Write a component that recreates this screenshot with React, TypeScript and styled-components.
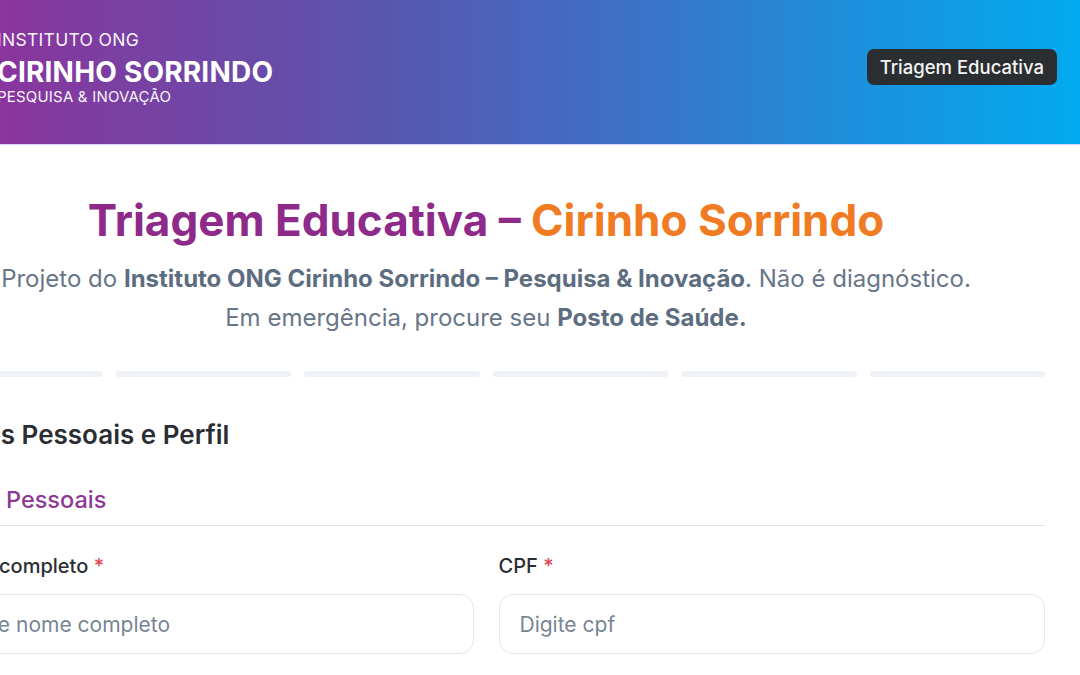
import React from 'react';
import styled, { createGlobalStyle } from 'styled-components';

const GlobalStyle = createGlobalStyle`
  html, body {
    margin: 0;
    padding: 0;
    background: #ffffff;
    overflow: hidden;
  }

  body {
    font-family: Inter, "Noto Sans", "Liberation Sans", sans-serif;
    -webkit-font-smoothing: antialiased;
  }
`;

const Page = styled.div`
  width: 1176px;
  margin-left: -96px;
  min-height: 675px;
  background: #ffffff;
`;

const Header = styled.header`
  box-sizing: border-box;
  height: 144px;
  padding: 0 23px 10px 93px;
  display: flex;
  align-items: center;
  justify-content: space-between;
  background: linear-gradient(90deg, #9a2a95 0%, #8a359d 8%, #5a55ae 40%, #3c72c6 62%, #1a92dd 82%, #02aaef 100%);
  box-shadow: 0 1px 0 rgba(210, 190, 255, 0.7);
  color: #ffffff;
`;

const Brand = styled.div`
  display: flex;
  flex-direction: column;
`;

const BrandTop = styled.span`
  font-size: 17.5px;
  line-height: 24px;
  font-weight: 400;
  letter-spacing: 0.3px;
  opacity: 0.95;
`;

const BrandName = styled.span`
  margin-top: 5px;
  font-size: 28px;
  line-height: 30px;
  font-weight: 700;
  letter-spacing: 0.2px;
`;

const BrandSub = styled.span`
  font-size: 15px;
  line-height: 20px;
  font-weight: 400;
  letter-spacing: 0.2px;
  opacity: 0.95;
`;

const Badge = styled.span`
  height: 36px;
  padding: 0 13px;
  display: inline-flex;
  align-items: center;
  border-radius: 7px;
  background: #2b2e30;
  color: #f4f4f4;
  font-size: 18.5px;
  font-weight: 500;
`;

const Main = styled.main`
  padding: 50px 35px 0 23px;
`;

const Title = styled.h1`
  margin: 0;
  text-align: center;
  font-size: 44px;
  line-height: 53px;
  font-weight: 700;
  color: #8e2a8a;
`;

const Accent = styled.span`
  color: #f07b22;
`;

const Intro = styled.p`
  margin: 12px 0 0;
  text-align: center;
  font-size: 24px;
  line-height: 39px;
  color: #677689;

  strong {
    font-weight: 700;
    color: #5d6d81;
  }
`;

const Steps = styled.div`
  margin-top: 34px;
  display: grid;
  grid-template-columns: repeat(6, 1fr);
  gap: 13px;
`;

const Step = styled.div<{ $done?: boolean }>`
  height: 6px;
  border-radius: 3px;
  background: ${(p) => (p.$done ? '#8e2a8a' : '#eef2f6')};
`;

const StepTitle = styled.h2`
  margin: 42px 0 0;
  padding-left: 8px;
  font-size: 26px;
  line-height: 32px;
  font-weight: 600;
  color: #2a2e33;
`;

const Section = styled.h3`
  margin: 34px 0 0;
  padding: 0 0 10px 1px;
  border-bottom: 1.5px solid #dde6ee;
  font-size: 23.5px;
  line-height: 30px;
  font-weight: 500;
  color: #8d3a94;
`;

const Fields = styled.div`
  margin-top: 28px;
  display: grid;
  grid-template-columns: 1fr 1fr;
  column-gap: 25px;
`;

const Field = styled.label<{ $indent?: number; $hint?: number }>`
  display: flex;
  flex-direction: column;
  gap: 16px;
  --indent: ${(p) => p.$indent ?? 0}px;
  --hint: ${(p) => p.$hint ?? 20}px;
`;

const LabelText = styled.span`
  padding-left: var(--indent);
  font-size: 20px;
  line-height: 24px;
  font-weight: 500;
  color: #2a2e33;
`;

const Required = styled.span`
  color: #e0464f;
`;

const Input = styled.input`
  box-sizing: border-box;
  height: 60px;
  width: 100%;
  padding: 0 20px 0 var(--hint);
  border: 1.5px solid #e1e7ef;
  border-radius: 14px;
  background: #ffffff;
  font-family: inherit;
  font-size: 21px;
  color: #2a2e33;
  outline: none;

  &::placeholder {
    color: #788495;
  }
`;

export default function App() {
  return (
    <Page>
      <GlobalStyle />
      <Header>
        <Brand>
          <BrandTop>INSTITUTO ONG</BrandTop>
          <BrandName>CIRINHO SORRINDO</BrandName>
          <BrandSub>PESQUISA &amp; INOVAÇÃO</BrandSub>
        </Brand>
        <Badge>Triagem Educativa</Badge>
      </Header>

      <Main>
        <Title>
          Triagem Educativa – <Accent>Cirinho Sorrindo</Accent>
        </Title>
        <Intro>
          Projeto do <strong>Instituto ONG Cirinho Sorrindo – Pesquisa &amp; Inovação</strong>. Não é diagnóstico.
          <br />
          Em emergência, procure seu <strong>Posto de Saúde.</strong>
        </Intro>

        <Steps>
          {[0, 1, 2, 3, 4, 5].map((i) => (
            <Step key={i} />
          ))}
        </Steps>

        <StepTitle>Dados Pessoais e Perfil</StepTitle>
        <Section>Dados Pessoais</Section>

        <Fields>
          <Field $indent={10} $hint={25}>
            <LabelText>
              Nome completo <Required>*</Required>
            </LabelText>
            <Input placeholder="Digite nome completo" />
          </Field>
          <Field>
            <LabelText>
              CPF <Required>*</Required>
            </LabelText>
            <Input placeholder="Digite cpf" />
          </Field>
        </Fields>
      </Main>
    </Page>
  );
}
